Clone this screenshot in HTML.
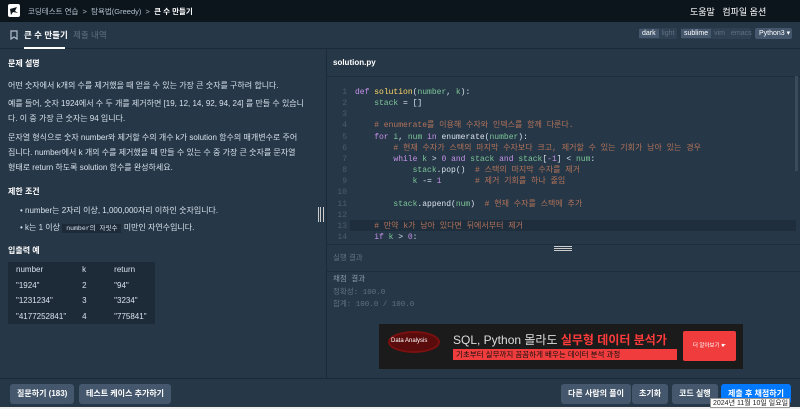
<!DOCTYPE html>
<html><head><meta charset="utf-8"><style>
*{margin:0;padding:0;box-sizing:border-box}
body{width:800px;height:409px;overflow:hidden;background:#263747;font-family:"Liberation Sans","Noto Sans CJK KR",sans-serif;color:#d7e2eb;position:relative;font-size:8px}
.a{position:absolute;white-space:nowrap}
.top{left:0;top:0;width:800px;height:22px;background:#0c151c}
.code{font-family:"Liberation Mono","Noto Sans CJK KR",monospace;font-size:8px}
.ln{color:#4e5d6c}
.kw{color:#c792ea}.fn{color:#ffd866}.pm{color:#78dce8}.gr{color:#7ec699}.cm{color:#b4735a}.nm{color:#c792ea}
.btn{background:#44576c;color:#fff;border-radius:3px;height:20px;line-height:20px;padding:0 7px;font-size:8px;font-weight:bold}
td{padding:0 8px;height:15.5px;font-size:8px;color:#d7e2eb}
</style></head><body>
<div class="a top"></div>
<svg class="a" style="left:8px;top:4px" width="12" height="13"><rect width="12" height="13" rx="2" fill="#fff"/><path d="M2 5 L9 3 L7 7 L10 9 L5 8 L3 11 Z" fill="#0c151c"/></svg>
<div class="a" style="left:28px;top:6px;font-size:7.5px;color:#b2c0cc">코딩테스트 연습 &nbsp;&gt;&nbsp; 탐욕법(Greedy) &nbsp;&gt;&nbsp; <b style="color:#fff">큰 수 만들기</b></div>
<div class="a" style="left:690px;top:5px;font-size:9px;color:#fff">도움말 &nbsp;&nbsp;컴파일 옵션</div>
<div class="a" style="left:0;top:22px;width:800px;height:27px;border-bottom:1px solid #1c2a38"></div>
<svg class="a" style="left:10px;top:30px" width="8" height="10"><path d="M1 1H7V9L4 7L1 9Z" fill="none" stroke="#b2c0cc" stroke-width="1.2"/></svg>
<div class="a" style="left:24px;top:29px;font-size:8.5px;font-weight:bold;color:#fff">큰 수 만들기</div>
<div class="a" style="left:24px;top:47px;width:41px;height:2px;background:#fff"></div>
<div class="a" style="left:73px;top:29px;font-size:8.5px;color:#5f7285">제출 내역</div>
<div class="a" style="left:639px;top:28px;width:38px;height:11px;background:#2f4052;border-radius:2px;font-size:7px;line-height:11px"><span style="background:#44576c;color:#fff;padding:1px 3px">dark</span><span style="color:#5f7285;padding:0 3px">light</span></div>
<div class="a" style="left:681px;top:28px;width:70px;height:11px;background:#2f4052;border-radius:2px;font-size:7px;line-height:11px"><span style="background:#44576c;color:#fff;padding:1px 3px">sublime</span><span style="color:#5f7285;padding:0 3px">vim</span><span style="color:#5f7285;padding:0 3px">emacs</span></div>
<div class="a" style="left:755px;top:28px;width:37px;height:11px;background:#44576c;border-radius:2px;font-size:7px;line-height:11px;color:#fff;padding-left:4px">Python3 ▾</div>
<div class="a" style="left:326px;top:49px;width:1px;height:329px;background:#1c2a38"></div>
<div class="a" style="left:8px;top:58px;font-weight:bold;color:#fff">문제 설명</div>
<div class="a" style="left:8px;top:77px;line-height:17px;white-space:normal;width:300px">어떤 숫자에서 k개의 수를 제거했을 때 얻을 수 있는 가장 큰 숫자를 구하려 합니다.</div>
<div class="a" style="left:8px;top:96px;line-height:15px;white-space:normal;width:300px">예를 들어, 숫자 1924에서 수 두 개를 제거하면 [19, 12, 14, 92, 94, 24] 를 만들 수 있습니다. 이 중 가장 큰 숫자는 94 입니다.</div>
<div class="a" style="left:8px;top:130px;line-height:15px;white-space:normal;width:292px">문자열 형식으로 숫자 number와 제거할 수의 개수 k가 solution 함수의 매개변수로 주어집니다. number에서 k 개의 수를 제거했을 때 만들 수 있는 수 중 가장 큰 숫자를 문자열 형태로 return 하도록 solution 함수를 완성하세요.</div>
<div class="a" style="left:8px;top:186px;font-weight:bold;color:#fff">제한 조건</div>
<div class="a" style="left:20px;top:205px">• number는 2자리 이상, 1,000,000자리 이하인 숫자입니다.</div>
<div class="a" style="left:20px;top:222px">• k는 1 이상 <span style="background:#1d2a38;padding:1px 4px;font-size:6.5px" class="code">number의 자릿수</span> 미만인 자연수입니다.</div>
<div class="a" style="left:8px;top:245px;font-weight:bold;color:#fff">입출력 예</div>
<table class="a" style="left:8px;top:262px;border-collapse:collapse;background:#1d2a38"><tr><td style="width:64px">number</td><td style="width:32px">k</td><td style="width:46px">return</td></tr><tr><td>"1924"</td><td>2</td><td>"94"</td></tr><tr><td>"1231234"</td><td>3</td><td>"3234"</td></tr><tr><td>"4177252841"</td><td>4</td><td>"775841"</td></tr></table>
<div class="a" style="left:318px;top:207px;width:6px;height:15px;border-left:1px solid #ccc;border-right:1px solid #ccc"><div style="margin-left:1px;width:1px;height:15px;background:#ccc"></div></div>
<div class="a" style="left:333px;top:58px;font-weight:bold;color:#fff">solution.py</div>
<div class="a" style="left:327px;top:76px;width:473px;height:1px;background:#1f2e3c"></div>
<div class="a" style="left:350px;top:220px;width:446px;height:11px;background:#1f2e3c"></div>
<div class="a" style="left:795px;top:76px;width:3px;height:95px;background:#3a4b5c"></div>
<div class="a code ln" style="left:333px;top:87px;width:14px;text-align:right;line-height:11.15px;white-space:pre">1
2
3
4
5
6
7
8
9
10
11
12
13
14</div>
<div class="a code" style="left:355px;top:87px;line-height:11.15px;white-space:pre"><span class="kw">def</span> <span class="fn">solution</span>(<span class="gr">number</span>, <span class="gr">k</span>):
    <span class="gr">stack</span> = []

    <span class="cm"># enumerate를 이용해 수자와 인덱스를 함께 다룬다.</span>
    <span class="kw">for</span> <span class="gr">i</span>, <span class="gr">num</span> <span class="kw">in</span> enumerate(<span class="gr">number</span>):
        <span class="cm"># 현재 수자가 스택의 마지막 수자보다 크고, 제거할 수 있는 기회가 남아 있는 경우</span>
        <span class="kw">while</span> <span class="gr">k</span> &gt; <span class="nm">0</span> <span class="kw">and</span> <span class="gr">stack</span> <span class="kw">and</span> <span class="gr">stack</span>[<span class="nm">-1</span>] &lt; <span class="gr">num</span>:
            <span class="gr">stack</span>.pop()  <span class="cm"># 스택의 마지막 수자를 제거</span>
            <span class="gr">k</span> -= <span class="nm">1</span>       <span class="cm"># 제거 기회를 하나 줄임</span>

        <span class="gr">stack</span>.append(<span class="gr">num</span>)  <span class="cm"># 현재 수자를 스택에 추가</span>

    <span class="cm"># 만약 k가 남아 있다면 뒤에서부터 제거</span>
    <span class="kw">if</span> <span class="gr">k</span> &gt; <span class="nm">0</span>:</div>
<div class="a" style="left:327px;top:244px;width:473px;height:1px;background:#1f2e3c"></div>
<div class="a" style="left:554px;top:246px;width:18px;height:5px;border-top:1px solid #ccc;border-bottom:1px solid #ccc"><div style="margin-top:1px;height:1px;background:#ccc"></div></div>
<div class="a" style="left:333px;top:252px;font-size:7.5px;color:#5f7285">실행 결과</div>
<div class="a" style="left:327px;top:271px;width:473px;height:1px;background:#1f2e3c"></div>
<div class="a code" style="left:333px;top:274px;font-size:7.5px;color:#8a9aab;line-height:12.5px;white-space:pre">채점 결과
<span style="color:#5f7285">정확성: 100.0
합계: 100.0 / 100.0</span></div>
<div class="a" style="left:379px;top:324px;width:364px;height:45px;background:#1b1b1b"></div>
<div class="a" style="left:388px;top:331px;width:52px;height:22px;border:2px solid #7a1010;border-radius:50%;background:#5a0c0c"></div>
<div class="a" style="left:391px;top:338px;font-size:6px;color:#fff">Data Analysis</div>
<div class="a" style="left:453px;top:331px;font-size:12px;color:#ddd">SQL, Python 몰라도 <b style="color:#ff3b3b">실무형 데이터 분석가</b></div>
<div class="a" style="left:453px;top:349px;width:224px;height:11px;background:#f03c3c;font-size:7.5px;color:#111;padding-left:3px;line-height:11px">기초부터 실무까지 꼼꼼하게 배우는 데이터 분석 과정</div>
<div class="a" style="left:683px;top:331px;width:53px;height:30px;background:#f03c3c;border-radius:2px;font-size:5.5px;color:#fff;text-align:center;line-height:30px">더 알아보기 ☛</div>
<div class="a" style="left:0;top:378px;width:800px;height:1px;background:#1c2a38"></div>
<div class="a" style="left:0;top:379px;width:800px;height:30px;background:#263747"></div>
<div class="a btn" style="left:10px;top:384px">질문하기 (183)</div>
<div class="a btn" style="left:79px;top:384px">테스트 케이스 추가하기</div>
<div class="a btn" style="left:561px;top:384px">다른 사람의 풀이</div>
<div class="a btn" style="left:632px;top:384px">초기화</div>
<div class="a btn" style="left:672px;top:384px">코드 실행</div>
<div class="a btn" style="left:721px;top:384px;background:#0078ff">제출 후 채점하기</div>
<div class="a" style="left:0;top:407px;width:800px;height:2px;background:#f0f0f0"></div>
<div class="a" style="left:710px;top:398px;width:80px;height:10px;background:#fff;border:1px solid #999;font-size:7px;color:#222;line-height:9px;padding-left:2px">2024년 11월 10일 일요일</div>
</body></html>
